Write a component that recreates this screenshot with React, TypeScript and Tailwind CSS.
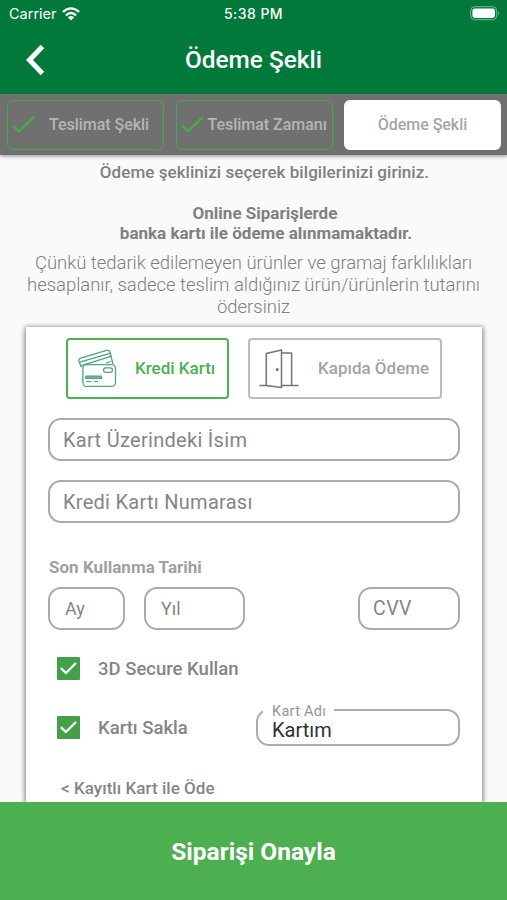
import type { ReactNode } from "react";

function Check({ className }: { className?: string }) {
  return (
    <svg className={className} width="24" height="18" viewBox="0 0 24 18" fill="none" stroke="#46a84a" strokeWidth="2.6">
      <path d="M1 9.5 7 15.3 22 1" />
    </svg>
  );
}

function DoneStep({ children, textClass }: { children: ReactNode; textClass: string }) {
  return (
    <div className="flex h-[50px] w-[157px] items-center rounded-[6px] border border-[#46a84a] pl-1">
      <Check className="shrink-0" />
      <span className={textClass}>{children}</span>
    </div>
  );
}

function CheckBox() {
  return (
    <span className="flex h-[23px] w-[23px] shrink-0 items-center justify-center rounded-[1px] bg-[#43a047]">
      <svg width="19" height="15" viewBox="0 0 19 15" fill="none" stroke="#fff" strokeWidth="2.3">
        <path d="M1.8 7.2 6.9 12 17 2" />
      </svg>
    </span>
  );
}

function CardsIcon() {
  return (
    <svg width="40" height="40" viewBox="0 0 40 40" fill="none" stroke="#4fa57c" strokeWidth="1.3" strokeLinejoin="round">
      <path d="M3.5 18.5 1 12.5Q.3 10 2.8 9.2L28.5 1.3Q31.3.7 32 3.5L35 15" />
      <path d="M1.8 13.2 32.8 4.2M3.2 16.7 33.7 7.2M28 14 33 12.5" />
      <rect x="4.9" y="15.6" width="32.6" height="21.8" rx="4" fill="#fff" />
      <rect x="25.5" y="18.8" width="9" height="4.6" rx="2.3" />
      <rect x="7.8" y="27.2" width="15.7" height="2.2" fill="#79bd98" />
      <path d="M8 32.5h5.5M16 32.5h4" strokeWidth="1" />
    </svg>
  );
}

function DoorIcon() {
  return (
    <svg width="40" height="40" viewBox="0 0 40 40" fill="none" stroke="#747474" strokeWidth="1.5" strokeLinejoin="round">
      <path d="M.5 36.5h39M22.5 4H32.6V36.5" />
      <path d="M7.3 4.5 22.5 1V38.6L7.3 36.5Z" fill="#fff" />
      <circle cx="18.2" cy="20.5" r=".8" fill="#777" />
    </svg>
  );
}

export default function App() {
  return (
    <div className="flex h-[900px] w-[507px] flex-col overflow-hidden bg-[#fafafa] font-['Roboto',sans-serif] whitespace-nowrap">
      <header className="z-20 h-[94px] shrink-0 bg-[#00793b] text-white">
        <div className="grid h-[27px] grid-cols-3 items-center pr-[7px] pl-[9px] font-['Inter',sans-serif] text-[14px]">
          <div className="flex items-center gap-[5px]">
            <span className="text-[14.5px]">Carrier</span>
            <svg width="18" height="14" viewBox="0 0 18 14" fill="none" stroke="#fff" strokeWidth="2.3">
              <path d="M.9 5Q9-2.3 17.1 5M3.9 8.3Q9 3.8 14.1 8.3" />
              <path d="M5.8 10.2Q9 7.6 12.2 10.2L9 13.5Z" fill="#fff" stroke="none" />
            </svg>
          </div>
          <span className="-ml-[2px] text-center text-[14px] font-medium tracking-[0.45px]">5:38 PM</span>
          <svg className="justify-self-end" width="30" height="15" viewBox="0 0 30 15">
            <rect x=".7" y=".7" width="26" height="13" rx="4" fill="none" stroke="#78b895" />
            <rect x="2.4" y="2.4" width="22.6" height="9.6" rx="2.4" fill="#fff" />
            <path d="M28 5Q30 7.2 28 9.4Z" fill="#78b895" />
          </svg>
        </div>
        <div className="grid h-[66px] grid-cols-[50px_1fr_50px] items-center">
          <svg className="ml-[25px]" width="22" height="32" viewBox="0 0 22 32" fill="none" stroke="#fff" strokeWidth="5">
            <path d="M17.5 2.5 4.5 16 17.5 29.5" />
          </svg>
          <h1 className="pt-px text-center text-[24.4px] font-medium">Ödeme Şekli</h1>
        </div>
      </header>

      <nav className="z-10 flex h-[61px] shrink-0 items-center gap-[11.5px] bg-[#707070] pl-[7px] text-[16px] font-medium tracking-[-0.03px] text-[#b5b5b5] shadow-[0_1px_4px_rgba(0,0,0,0.45)]">
        <DoneStep textClass="ml-[13px]">Teslimat Şekli</DoneStep>
        <DoneStep textClass="ml-[3px]">Teslimat Zamanı</DoneStep>
        <div className="flex h-[50px] w-[157px] items-center justify-center rounded-[6px] bg-white text-[#a6a6a6]">Ödeme Şekli</div>
      </nav>

      <main className="flex min-h-0 flex-1 flex-col">
        <div className="text-center text-[#808080]">
          <p className="mt-[7px] ml-[22px] text-[17px] leading-[20px] font-medium tracking-[0.05px]">Ödeme şeklinizi seçerek bilgilerinizi giriniz.</p>
          <p className="mt-[22px] ml-[25px] text-[17px] leading-[19.5px] font-bold">
            <span className="-ml-[2px]">Online Siparişlerde</span>
            <br />
            banka kartı ile ödeme alınmamaktadır.
          </p>
          <p className="mt-[9px] text-[18.5px] leading-[22px] font-light tracking-[-0.03px] text-[#808080]">
            Çünkü tedarik edilemeyen ürünler ve gramaj farklılıkları
            <br />
            hesaplanır, sadece teslim aldığınız ürün/ürünlerin tutarını
            <br />
            ödersiniz
          </p>
        </div>

        <section className="mt-[9px] ml-[26px] w-[456px] flex-1 bg-white px-[22px] pt-[11px] text-[#858585] shadow-[0_1px_5px_1px_rgba(0,0,0,0.5)]">
          <div className="ml-[18px] flex gap-[19px] text-[17px] font-medium">
            <div className="flex h-[61px] w-[163px] items-center rounded-[4px] border-2 border-[#4caf50] pl-[10px] text-[#4caf50]">
              <CardsIcon />
              <span className="ml-[17px]">Kredi Kartı</span>
            </div>
            <div className="flex h-[61px] w-[194px] items-center rounded-[4px] border-2 border-[#bcbcbc] pl-[9px] text-[#a3a3a3]">
              <DoorIcon />
              <span className="ml-[19px]">Kapıda Ödeme</span>
            </div>
          </div>

          <div className="mt-[19px] flex h-[43px] items-center rounded-[13px] border-2 border-[#ababab] pl-[13px] text-[20px] tracking-[0.3px]">Kart Üzerindeki İsim</div>
          <div className="mt-[19px] flex h-[43px] items-center rounded-[13px] border-2 border-[#ababab] pl-[13px] text-[20px] tracking-[0.27px]">Kredi Kartı Numarası</div>

          <div className="mt-[34px] ml-px h-[20px] text-[17px] leading-[20px] font-bold tracking-[0.03px] text-[#a0a0a0]">Son Kullanma Tarihi</div>
          <div className="mt-[10px] flex text-[18px]">
            <div className="flex h-[43px] w-[77px] items-center rounded-[13px] border-2 border-[#ababab] pl-[15px]">Ay</div>
            <div className="ml-[19px] flex h-[43px] w-[101px] items-center rounded-[13px] border-2 border-[#ababab] pl-[15px]">Yıl</div>
            <div className="ml-auto flex h-[43px] w-[102px] items-center rounded-[13px] border-2 border-[#ababab] pl-[13px] text-[19.5px] tracking-[0.5px]">CVV</div>
          </div>

          <div className="mt-[27px] ml-[9px] flex h-[23px] items-center gap-[18px] text-[18.5px] font-medium">
            <CheckBox />
            <span className="pt-[2px]">3D Secure Kullan</span>
          </div>
          <div className="mt-[19px] flex h-[47px] items-start pl-[9px] text-[19px] font-medium">
            <div className="mt-[17px] flex h-[23px] items-center gap-[18px] text-[18.5px]">
              <CheckBox />
              <span className="pt-[2px]">Kartı Sakla</span>
            </div>
            <fieldset className="ml-auto h-[47px] w-[204px] rounded-[13px] border-2 border-[#ababab] px-[5px] font-normal">
              <legend className="h-[21px] pt-[5px] pr-[8px] pl-[9px] text-[14.5px] leading-[16px] tracking-[0.3px] text-[#949494]">Kart Adı</legend>
              <span className="block pl-[9px] text-[20px] leading-[20px] text-[#303030]">Kartım</span>
            </fieldset>
          </div>
          <div className="mt-[32px] ml-[13px] text-[17px] leading-[20px] font-medium tracking-[0.04px]">&lt; Kayıtlı Kart ile Öde</div>
        </section>
      </main>

      <footer className="z-10 flex h-[98px] shrink-0 items-center justify-center bg-[#4caf50] pt-[3px] text-[24.5px] font-bold text-white">Siparişi Onayla</footer>
    </div>
  );
}
